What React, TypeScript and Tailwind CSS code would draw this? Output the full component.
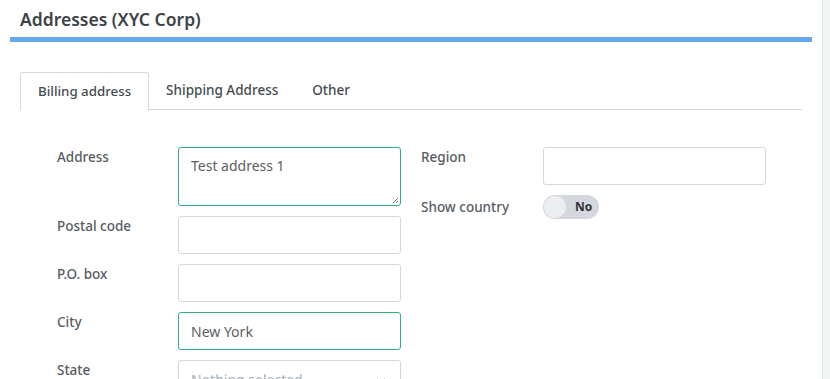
import { ChevronDown } from "lucide-react";

const font = { fontFamily: '"Noto Sans", "Open Sans", sans-serif' };

function Label({ children }: { children: React.ReactNode }) {
    return <div className="w-[121px] shrink-0 text-[13.5px] leading-[20px] font-medium text-[#565d63]">{children}</div>;
}

function Input({ value, green }: { value?: string; green?: boolean }) {
    return (
        <div
            className={`h-[38px] w-[223px] shrink-0 rounded-[3px] border bg-white px-[12px] flex items-center text-[14px] text-[#5c5f63] ${
                green ? "border-[#2fb27a]" : "border-[#d3d8de]"
            }`}
        >
            {value}
        </div>
    );
}

export default function App() {
    return (
        <div className="flex w-[830px] h-[379px] overflow-hidden bg-white" style={font}>
            <div className="w-[822px] shrink-0 flex flex-col">
                <h1 className="shrink-0 px-[20px] pt-[7px] h-[37px] text-[17.5px] leading-[24px] font-semibold text-[#3d4247]">
                    Addresses (XYC Corp)
                </h1>
                <div className="shrink-0 mx-[10px] h-[5px] bg-[#62a8ea]" />

                <div className="shrink-0 pl-[20px] pr-[20px] pt-[30px]">
                    {/* Tabs */}
                    <div className="flex h-[38px] border-b border-[#d3d8de]">
                        <div className="h-[38px] px-[17px] flex items-center rounded-t-[3px] border border-b-0 border-[#d3d8de] bg-white text-[13.3px] font-medium text-[#454b50]">
                            Billing address
                        </div>
                        <div className="h-[37px] pl-[17px] pr-[34px] flex items-center text-[13.5px] font-medium text-[#454b50]">
                            Shipping Address
                        </div>
                        <div className="h-[37px] flex items-center text-[13.5px] font-medium text-[#454b50]">
                            Other
                        </div>
                    </div>

                    {/* Form */}
                    <div className="flex gap-[20px] pl-[37px] pt-[37px]">
                        <div className="flex flex-col gap-[10px] w-[344px]">
                            <div className="flex">
                                <Label>Address</Label>
                                <div className="relative h-[59px] w-[223px] rounded-[3px] border border-[#2fb27a] bg-white px-[12px] pt-[8px] text-[14px] leading-[20px] text-[#5c5f63]">
                                    Test address 1
                                    <svg className="absolute right-[1px] bottom-[1px]" width="7" height="7" viewBox="0 0 7 7">
                                        <path d="M6 1L1 6M6 4L4 6" stroke="#777" strokeWidth="1" />
                                    </svg>
                                </div>
                            </div>
                            <div className="flex">
                                <Label>Postal code</Label>
                                <Input />
                            </div>
                            <div className="flex">
                                <Label>P.O. box</Label>
                                <Input />
                            </div>
                            <div className="flex">
                                <Label>City</Label>
                                <Input value="New York" green />
                            </div>
                            <div className="flex">
                                <Label>State</Label>
                                <div className="h-[38px] w-[223px] rounded-[3px] border border-[#d3d8de] bg-white px-[12px] flex items-center justify-between text-[14px] text-[#a3afb7] shadow-[0_1px_2px_rgba(0,0,0,0.08)]">
                                    <span>Nothing selected</span>
                                    <ChevronDown size={14} strokeWidth={2} className="text-[#555] mt-[4px]" />
                                </div>
                            </div>
                        </div>

                        <div className="flex flex-col gap-[10px] w-[345px]">
                            <div className="flex">
                                <div className="w-[122px] shrink-0 text-[13.5px] leading-[20px] font-medium text-[#565d63]">Region</div>
                                <Input />
                            </div>
                            <div className="flex items-center">
                                <div className="w-[122px] shrink-0 text-[13.5px] leading-[20px] font-medium text-[#565d63]">Show country</div>
                                <div className="h-[24px] w-[56px] rounded-full bg-[#d4d7dc] flex items-center pl-[1px]">
                                    <div className="h-[22px] w-[22px] rounded-full bg-[#eceef2]" />
                                    <span className="ml-[9px] text-[12px] font-bold text-[#333]">No</span>
                                </div>
                            </div>
                        </div>
                    </div>
                </div>
            </div>
            <div className="flex-1 border-l border-[#e3e7ea] bg-[#f1f4f5]" />
        </div>
    );
}
